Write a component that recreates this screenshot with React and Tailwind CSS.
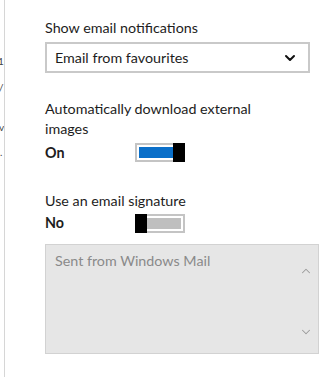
import { ChevronDown, ChevronUp } from "lucide-react";

function Toggle({ on }) {
  return (
    <div className="flex h-[19px] w-[50px] border-2 border-[#c4c4c4] bg-white">
      {on ? (
        <>
          <div className="m-[2px] mr-0 flex-1 bg-[#0a6fc9]" />
          <div className="-my-[2px] -mr-[2px] w-[12px] bg-black" />
        </>
      ) : (
        <>
          <div className="-my-[2px] -ml-[2px] w-[12px] bg-black" />
          <div className="m-[2px] ml-0 flex-1 bg-[#bfbfbf]" />
        </>
      )}
    </div>
  );
}

export default function App() {
  return (
    <div
      className="flex h-[377px] w-[335px] overflow-hidden bg-white text-[#1d1d1d]"
      style={{ fontFamily: 'Lato, "Open Sans", sans-serif' }}
    >
      <div className="flex w-[4px] flex-col overflow-hidden text-[10px] leading-none text-[#444]">
        <span className="mt-[56px] -ml-[2px]">1</span>
        <span className="mt-[16px] -ml-[1px]">/</span>
        <span className="mt-[30px] -ml-[1px]">v</span>
        <span className="mt-[15px]">.</span>
      </div>
      <div className="flex-1 border-l border-[#d6d6d6] pl-[40px] pr-[16px]">
        <div className="mt-[18px] text-[14.3px] leading-[20px]">Show email notifications</div>
        <div className="mt-[4px] flex h-[31px] w-[265px] items-center justify-between border-2 border-[#c9c9c9] pl-[8px] pr-[10px]">
          <span className="text-[14.3px]">Email from favourites</span>
          <ChevronDown size={16} strokeWidth={3} className="text-[#111]" />
        </div>

        <div className="mt-[26px] text-[14.3px] leading-[20px]">
          Automatically download external
          <br />
          images
        </div>
        <div className="mt-[3px] flex items-center">
          <span className="w-[90px] text-[14.3px] font-bold">On</span>
          <Toggle on />
        </div>

        <div className="mt-[28px] text-[14.3px] leading-[20px]">Use an email signature</div>
        <div className="mt-[1px] flex items-center">
          <span className="w-[90px] text-[14.3px] font-bold">No</span>
          <Toggle on={false} />
        </div>

        <div className="mt-[10px] flex h-[110px] w-[274px] justify-between border border-[#d2d2d2] bg-[#e6e6e6] pl-[9px] pr-[5px] pt-[5px]">
          <span className="text-[14.3px] text-[#8a8a8a]">Sent from Windows Mail</span>
          <div className="flex flex-col justify-between pb-[14px] pt-[14px]">
            <ChevronUp size={14} strokeWidth={1.75} className="text-[#9a9a9a]" />
            <ChevronDown size={14} strokeWidth={1.75} className="text-[#9a9a9a]" />
          </div>
        </div>
      </div>
    </div>
  );
}
